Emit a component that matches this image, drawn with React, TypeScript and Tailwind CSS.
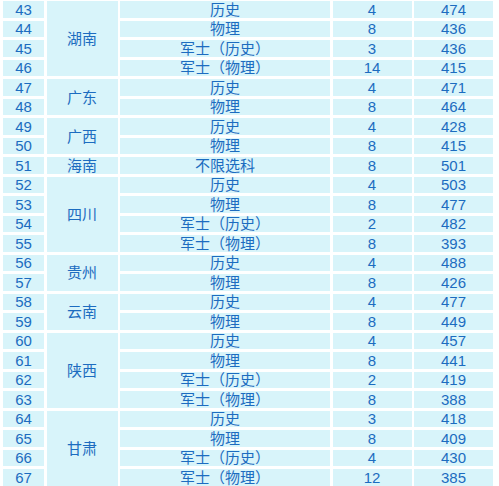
import React from "react";

type Group = { province: string; rows: [string, number, number][] };

const groups: Group[] = [
  { province: "湖南", rows: [["历史", 4, 474], ["物理", 8, 436], ["军士（历史）", 3, 436], ["军士（物理）", 14, 415]] },
  { province: "广东", rows: [["历史", 4, 471], ["物理", 8, 464]] },
  { province: "广西", rows: [["历史", 4, 428], ["物理", 8, 415]] },
  { province: "海南", rows: [["不限选科", 8, 501]] },
  { province: "四川", rows: [["历史", 4, 503], ["物理", 8, 477], ["军士（历史）", 2, 482], ["军士（物理）", 8, 393]] },
  { province: "贵州", rows: [["历史", 4, 488], ["物理", 8, 426]] },
  { province: "云南", rows: [["历史", 4, 477], ["物理", 8, 449]] },
  { province: "陕西", rows: [["历史", 4, 457], ["物理", 8, 441], ["军士（历史）", 2, 419], ["军士（物理）", 8, 388]] },
  { province: "甘肃", rows: [["历史", 3, 418], ["物理", 8, 409], ["军士（历史）", 4, 430], ["军士（物理）", 12, 385]] },
];

const spans: Record<number, string> = {
  1: "row-span-1",
  2: "row-span-2",
  4: "row-span-4",
};

const cell = "bg-[#d8f4fa] flex items-center justify-center leading-none";

export default function App() {
  let n = 43;
  const cells: React.ReactNode[] = [];

  groups.forEach((g) => {
    g.rows.forEach(([subject, count, score], i) => {
      cells.push(<div key={`n${n}`} className={cell}>{n}</div>);
      if (i === 0) {
        cells.push(
          <div key={`p${g.province}`} className={`${cell} ${spans[g.rows.length]}`}>
            {g.province}
          </div>
        );
      }
      cells.push(
        <div key={`s${n}`} className={cell}>{subject}</div>,
        <div key={`c${n}`} className={cell}>{count}</div>,
        <div key={`v${n}`} className={cell}>{score}</div>
      );
      n++;
    });
  });

  return (
    <div className="w-[499px] h-[486px] overflow-hidden bg-white pt-[1px] pl-[3px]">
      <div className="grid grid-cols-[41px_71px_210px_79px_79px] auto-rows-[16.5px] gap-x-[2.5px] gap-y-[3px] text-[15px] text-[#1c6cc0] font-['Liberation_Sans','Noto_Sans_CJK_SC',sans-serif]">
        {cells}
      </div>
    </div>
  );
}
